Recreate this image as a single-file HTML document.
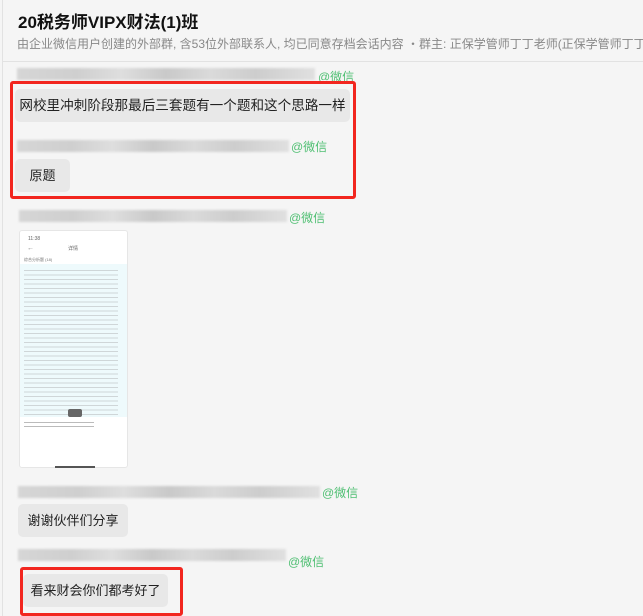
<!DOCTYPE html>
<html><head><meta charset="utf-8"><style>
*{margin:0;padding:0;box-sizing:border-box}
body{width:643px;height:616px;overflow:hidden;background:#f5f5f5;font-family:"Liberation Sans","Noto Sans CJK SC",sans-serif;position:relative}
.a{position:absolute}
.blur{position:absolute;height:12px;background:linear-gradient(90deg,#d6d6d6,#cfcfcf 20%,#dedede 35%,#c9c9c9 50%,#dadada 65%,#cdcdcd 80%,#e0e0e0);filter:blur(1px)}
.wx{position:absolute;font-size:12px;color:#4fbf72}
.b{position:absolute;background:#e8e8e8;border-radius:5px;font-size:13px;color:#222;padding:0;text-align:center;line-height:33px;height:33px;white-space:nowrap}
.red{position:absolute;border:3px solid #f2261f;border-radius:3px}
</style></head><body>
<div class="a" style="left:2px;top:0;width:1px;height:616px;background:#e2e2e2"></div>
<div class="a" style="left:18px;top:8px;font-size:17px;font-weight:bold;color:#111">20税务师VIPX财法(1)班</div>
<div class="a" style="left:17px;top:35px;font-size:12px;color:#888;white-space:nowrap">由企业微信用户创建的外部群, 含53位外部联系人, 均已同意存档会话内容 ・群主: 正保学管师丁丁老师(正保学管师丁丁老师</div>
<div class="a" style="left:2px;top:61px;width:641px;height:1px;background:#e2e2e2"></div>

<div class="blur" style="left:17px;top:68px;width:298px"></div><div class="wx" style="left:318px;top:68px">@微信</div>
<div class="red" style="left:10px;top:81px;width:346px;height:118px"></div>
<div class="b" style="left:15px;top:89px;width:335px;font-size:13.6px">网校里冲刺阶段那最后三套题有一个题和这个思路一样</div>
<div class="blur" style="left:17px;top:140px;width:272px"></div><div class="wx" style="left:291px;top:138px">@微信</div>
<div class="b" style="left:15px;top:159px;width:55px">原题</div>

<div class="blur" style="left:19px;top:210px;width:268px"></div><div class="wx" style="left:289px;top:209px">@微信</div>
<div class="a" style="left:19px;top:230px;width:109px;height:238px;background:#fff;border-radius:3px;border:1px solid #e6e6e6">
 <div class="a" style="left:8px;top:5px;font-size:5px;color:#666">11:38</div>
 <div class="a" style="left:7px;top:14px;font-size:7px;color:#888">←</div>
 <div class="a" style="left:48px;top:14px;font-size:5px;color:#666">详情</div>
 <div class="a" style="left:4px;top:26px;font-size:4px;color:#777">综合分析题 (18)</div>
 <div class="a" style="left:0;top:33px;width:107px;height:153px;background:#eefafc;background-image:repeating-linear-gradient(180deg,transparent 0 2px,#cfd6d8 2px 3px,transparent 3px 4.5px);background-size:94px 100%;background-repeat:no-repeat;background-position:4px 4px"></div>
 <div class="a" style="left:48px;top:178px;width:14px;height:8px;background:#666;border-radius:2px"></div>
 <div class="a" style="left:4px;top:191px;width:70px;height:8px;background:repeating-linear-gradient(180deg,#bbb 0 1px,transparent 1px 4px)"></div>
 <div class="a" style="left:35px;top:235px;width:40px;height:2px;background:#555"></div>
</div>

<div class="blur" style="left:18px;top:486px;width:302px"></div><div class="wx" style="left:322px;top:484px">@微信</div>
<div class="b" style="left:18px;top:504px;width:110px">谢谢伙伴们分享</div>

<div class="blur" style="left:18px;top:549px;width:268px"></div><div class="wx" style="left:288px;top:553px">@微信</div>
<div class="red" style="left:20px;top:567px;width:163px;height:49px"></div>
<div class="b" style="left:23px;top:574px;width:145px">看来财会你们都考好了</div>
</body></html>
